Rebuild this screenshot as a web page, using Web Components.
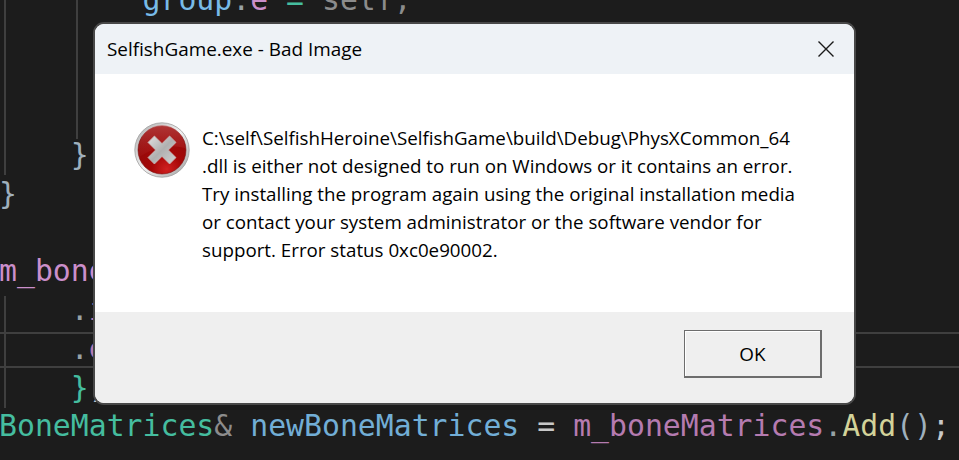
<!DOCTYPE html>
<html>
<head>
<meta charset="utf-8">
<title>Bad Image</title>
<style>
  html, body { margin: 0; padding: 0; height: 100%; background: #1c1c1c; overflow: hidden; }
  .blue { color: #78bbe8; }
  .dim { color: #98a2a6; }
  .pink { color: #cb8fcb; }
  .teal { color: #45bd9f; }
  .grey { color: #8c8c8c; }
  .plum { color: #b57bb0; }
  .sky { color: #72aed6; }
  .gold { color: #d3d39a; }
  .pale { color: #c8c8c8; }
  .brace { color: #9fb0bd; }
</style>
</head>
<body>
<error-scene>
  <code-view slot="code">
    <code-line><span class="blue">        group</span><span class="dim">.</span><span class="pink">e</span> <span class="teal">=</span> <span class="grey">self;</span></code-line>
    <code-line></code-line>
    <code-line></code-line>
    <code-line></code-line>
    <code-line><span class="brace">    }</span></code-line>
    <code-line><span class="brace">}</span></code-line>
    <code-line></code-line>
    <code-line><span class="pink">m_bone</span></code-line>
    <code-line><span class="dim">    .</span><span class="plum">i</span></code-line>
    <code-line highlight><span class="dim">    .</span><span class="plum">e</span></code-line>
    <code-line><span class="teal">    }</span><span class="pale">)</span></code-line>
    <code-line><span class="teal">BoneMatrices</span><span class="grey">&amp;</span> <span class="sky">newBoneMatrices</span> <span class="pale">=</span> <span class="plum">m_boneMatrices</span><span class="dim">.</span><span class="gold">Add</span><span class="brace">()</span><span class="pale">;</span></code-line>
  </code-view>
  <error-dialog slot="dialog" heading="SelfishGame.exe - Bad Image">
    <error-icon slot="icon"></error-icon>
    C:\self\SelfishHeroine\SelfishGame\build\Debug\PhysXCommon_64<br>
    .dll is either not designed to run on Windows or it contains an error.<br>
    Try installing the program again using the original installation media<br>
    or contact your system administrator or the software vendor for<br>
    support. Error status 0xc0e90002.
    <dialog-button slot="actions">OK</dialog-button>
  </error-dialog>
</error-scene>

<script>
  // escena completa: codigo de fondo y dialogo encima
  class ErrorScene extends HTMLElement {
    connectedCallback() {
      const root = this.attachShadow({ mode: 'open' });
      root.innerHTML = `
      <style>
        :host { display: block; position: relative; width: 959px; height: 460px; overflow: hidden; background: #1c1c1c; }
        .dialog { position: absolute; left: 93px; top: 22px; }
      </style>
      <slot name="code"></slot>
      <div class="dialog"><slot name="dialog"></slot></div>
      `;
    }
  }

  class CodeView extends HTMLElement {
    connectedCallback() {
      const root = this.attachShadow({ mode: 'open' });
      root.innerHTML = `
      <style>
        :host {
          display: block;
          position: relative;
          margin-top: -19px;
          margin-left: -1px;
          font: 29.8px/38.75px "DejaVu Sans Mono", monospace;
          color: #c8c8c8;
        }
        .guide { position: absolute; width: 2px; background: #3f3f3f; }
      </style>
      <div class="guide" style="left: 5px; top: 0; height: 194px"></div>
      <div class="guide" style="left: 77px; top: 0; height: 158px"></div>
      <div class="guide" style="left: 5px; top: 315px; height: 112px"></div>
      <slot></slot>
      `;
    }
  }

  class CodeLine extends HTMLElement {
    connectedCallback() {
      const root = this.attachShadow({ mode: 'open' });
      root.innerHTML = `
      <style>
        :host { display: block; position: relative; height: 38.75px; }
        :host([highlight])::before {
          content: "";
          position: absolute;
          left: 0; right: 0; top: 2px; bottom: 1px;
          border-top: 2px solid #3f3f3f;
          border-bottom: 2px solid #3f3f3f;
        }
        .text { white-space: pre; }
      </style>
      <div class="text"><slot></slot></div>
      `;
    }
  }

  class ErrorDialog extends HTMLElement {
    connectedCallback() {
      const root = this.attachShadow({ mode: 'open' });
      root.innerHTML = `
      <style>
        :host {
          display: flex;
          flex-direction: column;
          width: 759px;
          height: 379px;
          box-sizing: content-box;
          border: 2px solid #484848;
          border-radius: 11px;
          overflow: hidden;
          background: #fff;
          color: #000;
          font-family: "Open Sans", "Noto Sans", sans-serif;
        }
        .title {
          height: 50px;
          flex: none;
          display: flex;
          align-items: center;
          justify-content: space-between;
          padding: 0 20.5px 0 12px;
          background: #eef2f6;
          font-size: 18.9px;
        }
        .close { width: 16px; height: 16px; display: block; }
        .body {
          height: 238px;
          flex: none;
          display: flex;
          gap: 12px;
          padding: 50px 0 0 39px;
          box-sizing: border-box;
        }
        .message {
          font-size: 18.75px;
          line-height: 28px;
          white-space: nowrap;
        }
        .footer {
          flex: 1;
          display: flex;
          justify-content: flex-end;
          align-items: flex-start;
          padding: 18px 32px 0 0;
          background: #efefef;
        }
      </style>
      <div class="title">
        <span>${this.getAttribute('heading')}</span>
        <svg class="close" viewBox="0 0 16 16"><path d="M.5 .5L15.5 15.5M15.5 .5L.5 15.5" stroke="#1a1a1a" stroke-width="1.4" fill="none"/></svg>
      </div>
      <div class="body">
        <slot name="icon"></slot>
        <div class="message"><slot></slot></div>
      </div>
      <div class="footer"><slot name="actions"></slot></div>
      `;
    }
  }

  class ErrorIcon extends HTMLElement {
    connectedCallback() {
      const root = this.attachShadow({ mode: 'open' });
      root.innerHTML = `
      <style>
        :host { display: block; width: 56px; height: 56px; flex: none; margin-top: -2px; }
        svg { display: block; }
      </style>
      <svg width="56" height="56" viewBox="0 0 56 56">
        <defs>
          <linearGradient id="ring" x1="0" y1="0" x2="1" y2="1">
            <stop offset="0" stop-color="#a9a9a9"/>
            <stop offset="0.5" stop-color="#f2f2f2"/>
            <stop offset="1" stop-color="#9c9c9c"/>
          </linearGradient>
          <radialGradient id="red" cx="0.6" cy="0.9" r="0.8">
            <stop offset="0" stop-color="#d02020"/>
            <stop offset="0.4" stop-color="#a50707"/>
            <stop offset="1" stop-color="#900c0c"/>
          </radialGradient>
          <linearGradient id="gloss" x1="0" y1="0" x2="0" y2="1">
            <stop offset="0" stop-color="#dc6b6b" stop-opacity="0.45"/>
            <stop offset="1" stop-color="#c43a3a" stop-opacity="0.1"/>
          </linearGradient>
          <linearGradient id="cross" x1="0" y1="0" x2="1" y2="1">
            <stop offset="0" stop-color="#e2e2e2"/>
            <stop offset="0.5" stop-color="#b0b0b0"/>
            <stop offset="1" stop-color="#d2d2d2"/>
          </linearGradient>
        </defs>
        <circle cx="28" cy="28" r="27.2" fill="url(#ring)" stroke="#a0a0a0" stroke-width="0.8"/>
        <circle cx="28" cy="28" r="24" fill="url(#red)" stroke="#7b1010" stroke-width="0.6"/>
        <path d="M5 26A23 23 0 0 1 51 26Q28 20 5 35Z" fill="url(#gloss)"/>
        <path d="M20.4 14L28 21.6L35.6 14L42 20.4L34.4 28L42 35.6L35.6 42L28 34.4L20.4 42L14 35.6L21.6 28L14 20.4Z" fill="url(#cross)" stroke="#c9b5b5" stroke-width="0.8" stroke-linejoin="round"/>
      </svg>
      `;
    }
  }

  class DialogButton extends HTMLElement {
    connectedCallback() {
      const root = this.attachShadow({ mode: 'open' });
      root.innerHTML = `
      <style>
        :host {
          display: flex;
          align-items: center;
          justify-content: center;
          box-sizing: border-box;
          width: 138px;
          height: 48px;
          background: #efefef;
          border: 1px solid #6d6d6d;
          border-right-width: 2px;
          border-bottom-width: 2px;
          box-shadow: inset 1px 1px 0 #fff;
          font-size: 18.9px;
          color: #000;
        }
      </style>
      <slot></slot>
      `;
    }
  }

  customElements.define('error-scene', ErrorScene);
  customElements.define('code-view', CodeView);
  customElements.define('code-line', CodeLine);
  customElements.define('error-dialog', ErrorDialog);
  customElements.define('error-icon', ErrorIcon);
  customElements.define('dialog-button', DialogButton);
</script>
</body>
</html>
